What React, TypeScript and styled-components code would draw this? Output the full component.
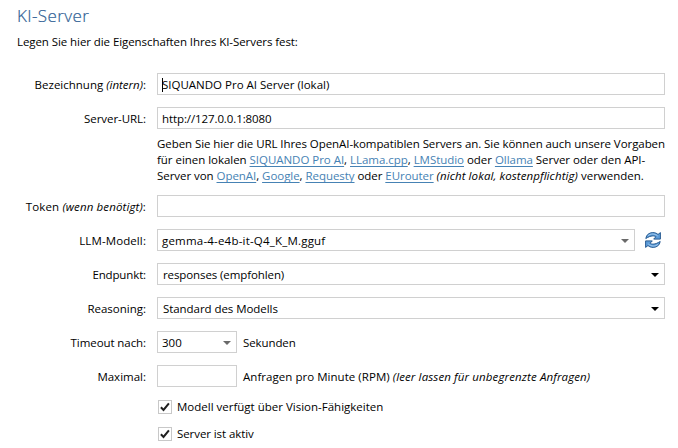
import React from 'react';
import styled, { createGlobalStyle } from 'styled-components';

const GlobalStyle = createGlobalStyle`
  * { box-sizing: border-box; }
  body {
    margin: 0;
    background: #fff;
    color: #000;
    font: 11.5px/16px "Open Sans", "Noto Sans", sans-serif;
  }
`;

const Page = styled.main`
  width: 678px;
  height: 448px;
  padding: 4px 13px 0 0;
  overflow: hidden;
`;

const Title = styled.h1`
  margin: 0 0 0 17px;
  font-size: 17px;
  font-weight: 300;
  line-height: 24px;
  letter-spacing: 0.4px;
  color: #2f5f95;
  -webkit-text-stroke: 0.2px #2f5f95;
`;

const Intro = styled.p`
  margin: 6px 0 23px 17px;
  letter-spacing: -0.075px;
`;

const Form = styled.form`
  display: flex;
  flex-direction: column;
  gap: 12px;
`;

const Row = styled.div`
  display: grid;
  grid-template-columns: 146px 508px;
  column-gap: 11px;
`;

const Text = styled.span<{ $track?: number }>`
  white-space: pre;
  letter-spacing: ${({ $track = 0 }) => $track}px;
`;

const Label = styled(Text)`
  line-height: 22px;
  padding-top: 1px;
  height: 22px;
  text-align: right;
`;

const Controls = styled.div`
  display: flex;
  align-items: center;
`;

const Field = styled.div<{ $width?: number; $inset?: number }>`
  display: flex;
  align-items: center;
  justify-content: space-between;
  width: ${({ $width = 508 }) => $width}px;
  height: 22px;
  padding: 1px 5px 0 ${({ $inset = 4 }) => $inset}px;
  border: 1px solid #d0d0d0;
`;

const Caret = styled.i`
  width: 1px;
  height: 14px;
  margin-right: -1px;
  background: #000;
`;

const Value = styled(Text)`
  flex: 1;
`;

const Suffix = styled.span`
  margin-left: 6px;
  padding-top: 1px;
`;

const Help = styled.p`
  grid-column: 2;
  margin: -5px 0 -1px;
  height: 48px;
`;

const Line = styled(Text)`
  display: block;
`;

const Link = styled.a`
  color: #4682b4;
  text-decoration: underline;
  text-decoration-thickness: 1px;
  text-underline-offset: 2px;
  text-decoration-skip-ink: none;
`;

const RefreshButton = styled.button`
  width: 16px;
  height: 16px;
  margin: 0 0 0 10px;
  padding: 0;
  border: 0;
  background: none;
  line-height: 0;
`;

const Checks = styled.div`
  display: flex;
  flex-direction: column;
  gap: 11px;
  margin: 0 0 0 158px;
`;

const CheckRow = styled.label`
  display: flex;
  align-items: center;
  gap: 5px;
  height: 16px;
`;

const Box = styled.span`
  display: block;
  width: 14px;
  height: 14px;
  border: 1px solid #c8c8c8;
  line-height: 0;
`;

const Arrow = ({ color = '#000' }: { color?: string }) => (
  <svg width="8" height="4" viewBox="0 0 8 4">
    <path d="M0 0h8L4 4z" fill={color} />
  </svg>
);

const RefreshIcon = () => (
  <svg width="16" height="16" viewBox="0 0 16 16" strokeLinejoin="miter">
    <g fill="#5b9bd8" stroke="#2a5c92" strokeWidth="1">
      <path d="M.8 6.500C1.300 2.800 4.200.6 7.800.6c2.200 0 3.800.6 5.200 1.900L15.400.6v6.500H8.700l2.200-2.300C9.900 4 8.900 3.900 7.800 3.900 5.300 3.900 3.500 5 .8 6.500z" />
      <path d="M15.200 9.500C14.700 13.200 11.800 15.400 8.200 15.400c-2.200 0-3.800-.6-5.200-1.900L.6 15.400V8.900h6.700l-2.200 2.300c1 .8 2 .9 3.100.9 2.500 0 4.300-1.100 7-2.600z" />
    </g>
    <path d="M3 3.700C5.600 1.500 9.700 1.300 12.700 4" fill="none" stroke="#b5d6f3" strokeWidth="0.8" />
    <path d="M13 12.300C10.400 14.500 6.300 14.700 3.300 12" fill="none" stroke="#b5d6f3" strokeWidth="0.8" />
  </svg>
);

const Checkbox = ({ label, track = 0 }: { label: string; track?: number }) => (
  <CheckRow>
    <Box>
      <svg width="12" height="12" viewBox="0 0 12 12">
        <path d="M1.900 6.300 4.500 9 9.900 2.300" fill="none" stroke="#202020" strokeWidth="2" />
      </svg>
    </Box>
    <Text $track={track}>{label}</Text>
  </CheckRow>
);

export default function App() {
  return (
    <Page>
      <GlobalStyle />
      <Title>KI-Server</Title>
      <Intro>Legen Sie hier die Eigenschaften Ihres KI-Servers fest:</Intro>
      <Form>
        <Row>
          <Label>Bezeichnung <em>(intern)</em>:</Label>
          <Field>
            <Caret />
            <Value>SIQUANDO Pro AI Server (lokal)</Value>
          </Field>
        </Row>
        <Row>
          <Label $track={-0.05}>Server-URL:</Label>
          <Field><Value $track={-0.1}>http://127.0.0.1:8080</Value></Field>
        </Row>
        <Row>
          <Help>
            <Line $track={-0.07}>
              Geben Sie hier die URL Ihres OpenAI-kompatiblen Servers an. Sie können auch unsere Vorgaben
            </Line>
            <Line $track={-0.035}>
              für einen lokalen <Link>SIQUANDO Pro AI</Link>, <Link>LLama.cpp</Link>, <Link>LMStudio</Link> oder <Link>Ollama</Link> Server oder den API-
            </Line>
            <Line>
              <Text $track={-0.05}>
                Server von <Link>OpenAI</Link>, <Link>Google</Link>, <Link>Requesty</Link> oder <Link>EUrouter</Link>{' '}
              </Text>
              <Text as="em" $track={0.09}>(nicht lokal, kostenpflichtig)</Text> verwenden.
            </Line>
          </Help>
        </Row>
        <Row>
          <Label $track={0.12}>Token <em>(wenn benötigt)</em>:</Label>
          <Field />
        </Row>
        <Row>
          <Label $track={0.1}>LLM-Modell:</Label>
          <Controls>
            <Field $width={478}>
              <Value $track={0.2}>gemma-4-e4b-it-Q4_K_M.gguf</Value>
              <Arrow color="#6a6a6a" />
            </Field>
            <RefreshButton type="button" aria-label="Aktualisieren"><RefreshIcon /></RefreshButton>
          </Controls>
        </Row>
        <Row>
          <Label $track={-0.13}>Endpunkt:</Label>
          <Field $inset={5}>
            <Value $track={-0.1}>responses (empfohlen)</Value>
            <Arrow />
          </Field>
        </Row>
        <Row>
          <Label>Reasoning:</Label>
          <Field $inset={5}>
            <Value $track={-0.06}>Standard des Modells</Value>
            <Arrow />
          </Field>
        </Row>
        <Row>
          <Label $track={-0.08}>Timeout nach:</Label>
          <Controls>
            <Field $width={80}>
              <Value>300</Value>
              <Arrow color="#6a6a6a" />
            </Field>
            <Suffix><Text $track={-0.1}>Sekunden</Text></Suffix>
          </Controls>
        </Row>
        <Row>
          <Label>Maximal:</Label>
          <Controls>
            <Field $width={80} />
            <Suffix>
              <Text $track={0.04}>Anfragen pro Minute (RPM) </Text>
              <Text as="em" $track={0.12}>(leer lassen für unbegrenzte Anfragen)</Text>
            </Suffix>
          </Controls>
        </Row>
        <Checks>
          <Checkbox label="Modell verfügt über Vision-Fähigkeiten" />
          <Checkbox label="Server ist aktiv" track={-0.08} />
        </Checks>
      </Form>
    </Page>
  );
}
